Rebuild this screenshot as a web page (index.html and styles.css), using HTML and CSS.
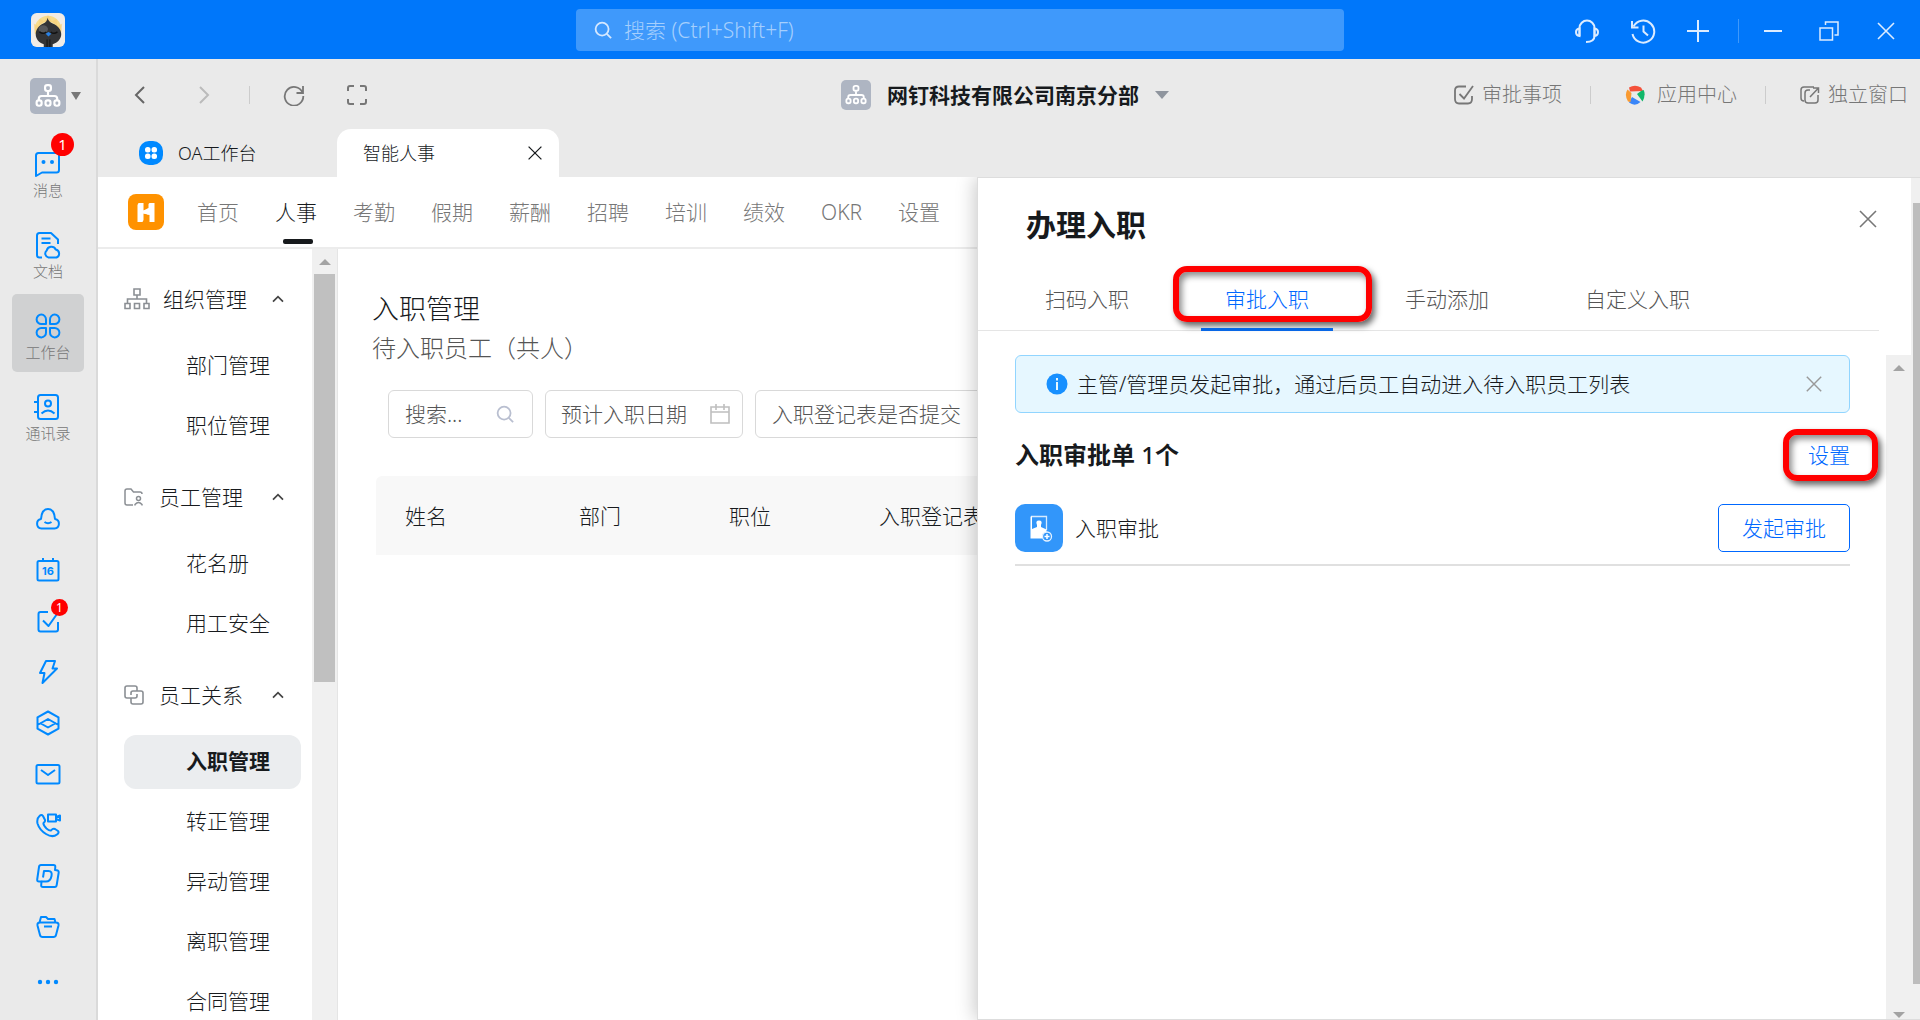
FILE: index.html
```html
<!DOCTYPE html>
<html lang="zh-CN">
<head>
<meta charset="utf-8">
<title>智能人事</title>
<link rel="stylesheet" href="styles.css">
</head>
<body>
<svg class="defs" aria-hidden="true">
  <symbol id="org" viewBox="0 0 24 24"><g fill="none" stroke="#fff" stroke-width="2"><rect x="9.300" y="2" width="5.400" height="5.400" rx="2"/><path d="M12 8v5M3.500 16v-1.500q0-2.500 2.500-2.500h12q2.500 0 2.500 2.500V16"/><rect x="1.500" y="16" width="4.600" height="5" rx="2"/><rect x="9.700" y="16" width="4.600" height="5" rx="2"/><rect x="17.900" y="16" width="4.600" height="5" rx="2"/></g></symbol>
  <symbol id="cross" viewBox="0 0 20 20"><path d="M2 2l16 16M18 2L2 18" fill="none" stroke="currentColor" stroke-width="1.600"/></symbol>
  <symbol id="lens" viewBox="0 0 20 20"><g fill="none" stroke="currentColor" stroke-width="2"><circle cx="9" cy="9" r="7.200"/><path d="M14.200 14.200l4.800 4.800"/></g></symbol>
  <symbol id="up" viewBox="0 0 12 8"><path d="M1 6.700l5-5 5 5" fill="none" stroke="currentColor" stroke-width="1.700"/></symbol>
</svg>

<header class="titlebar">
  <svg class="avatar" viewBox="0 0 36 36"><rect width="36" height="36" rx="6" fill="#f1ece6"/><circle cx="18" cy="17" r="14" fill="#f8dc8c"/><path d="M4 22L3 11l5 3 1-8 5 3 4-7 4 7 5-3 1 8 5-3-1 11" fill="#f6cf78" opacity=".6"/><circle cx="18" cy="20" r="11" fill="#fbeeb5"/><path d="M17.500 5c.8 3 2.500 5 5.500 6 5 2 9 6 9 11.500 0 5-4 9-9 10.500V36H13.500v-3c-5-1.500-8.500-5.500-8.500-10.500 0-5.500 3.500-9.500 8-11.500 3-1 4-3 4.500-6z" fill="#333436"/><ellipse cx="13" cy="17" rx="5" ry="4" fill="#56585b"/><path d="M9 20q4 3 7 0M21 20q3 3 7 0" stroke="#111" fill="none" stroke-width="1.500"/><path d="M15.500 22l3-2 3 2-3 3z" fill="#2882e8"/><path d="M17 28v8M20 28v8" stroke="#111"/></svg>
  <label class="global-search">
    <svg width="18" height="18"><use href="#lens"/></svg>
    <input type="text" placeholder="搜索 (Ctrl+Shift+F)" aria-label="搜索">
  </label>
  <div class="window-tools">
    <button aria-label="客服"><svg width="24" height="26" viewBox="1 0 24 26"><g fill="none" stroke="#dcecff" stroke-width="2"><path d="M5.500 18V10a7.500 7.500 0 0 1 15 0v8c0 4-3 6-8.500 6"/><path d="M5.500 10.500c-2.500.3-3.500 1.500-3.500 3.500s1 3.700 3.500 4zM20.500 10.500c2.500.3 3.500 1.500 3.500 3.500s-1 3.700-3.500 4z"/></g></svg></button>
    <button aria-label="历史"><svg width="26" height="26" viewBox="0 0 26 26"><g fill="none" stroke="#dcecff" stroke-width="2"><path d="M3.500 8.500A11 11 0 1 1 2.500 16"/><path d="M2 3v6.500h6.500"/><path d="M13.500 7.500v6l4.500 4"/></g></svg></button>
    <button aria-label="新建"><svg width="22" height="22" viewBox="0 0 22 22"><path d="M11 0v22M0 11h22" stroke="#dcecff" stroke-width="2"/></svg></button>
    <i class="bar-divider"></i>
    <button aria-label="最小化"><svg width="18" height="18" viewBox="0 0 18 18"><path d="M0 9h18" stroke="#dcecff" stroke-width="2"/></svg></button>
    <button aria-label="还原" class="restore"><svg width="20" height="20" viewBox="0 0 20 20"><g fill="none" stroke="#dcecff" stroke-width="1.500"><path d="M1 7h12.500v12H1z"/><path d="M6.500 4V1H19v13h-3.500"/></g></svg></button>
    <button aria-label="关闭"><svg width="20" height="20"><use href="#cross"/></svg></button>
  </div>
</header>

<div class="shell">
  <nav class="rail">
    <button class="org-switch" aria-label="切换组织"><span class="org-badge"><svg width="26" height="26"><use href="#org"/></svg></span><i class="caret"></i></button>
    <a class="rail-item" href="#"><svg width="28" height="28" viewBox="0 0 28 28"><path d="M2 26V5.500Q2 3 4.500 3h18Q25 3 25 5.500V20q0 2.500-2.500 2.500H8z" class="ln"/><circle cx="9.500" cy="12" r="2" fill="#0089ff"/><circle cx="18" cy="12" r="2" fill="#0089ff"/></svg><span>消息</span><b class="count">1</b></a>
    <a class="rail-item" href="#"><svg width="28" height="28" viewBox="0 0 28 28"><path d="M8 26.500H5.500Q3 26.500 3 24V4.500Q3 2 5.500 2H17l7 6.500V13M7.500 7.500h9M7.500 12h9" class="ln"/><path d="M14.500 26.500a4 4 0 0 1-1.800-7 4.800 4.800 0 0 1 9-1 4.200 4.200 0 0 1 .8 8z" class="ln"/></svg><span>文档</span></a>
    <a class="rail-item current" href="#"><svg width="28" height="28" viewBox="0 0 28 28"><path d="M12 12H7.500A4.700 4.700 0 1 1 12 7.500zM16 12V7.500A4.700 4.700 0 1 1 20.500 12zM12 16v4.500A4.700 4.700 0 1 1 7.500 16zM16 16h4.500a4.700 4.700 0 1 1-4.500 4.500z" class="ln"/></svg><span>工作台</span></a>
    <a class="rail-item" href="#"><svg width="28" height="28" viewBox="0 0 28 28"><rect x="4" y="2" width="20" height="24" rx="2.500" class="ln"/><path d="M0 9h4M0 19h4M7.500 20.500q6.500-6 13 0" class="ln"/><circle cx="14" cy="10.500" r="3" class="ln"/></svg><span>通讯录</span></a>
    <div class="rail-apps">
      <a href="#" aria-label="钉盘"><svg width="26" height="26" viewBox="0 0 26 26"><path d="M6.500 22.500a4.800 4.800 0 0 1-.5-9.500C6.500 6 9 3 13 3s6.500 3 7 10a4.800 4.800 0 0 1-.5 9.500zM9.500 16q3.500 2.500 7 0" class="ln"/></svg></a>
      <a href="#" aria-label="日历"><svg width="26" height="26" viewBox="0 0 26 26"><rect x="2.500" y="4" width="21" height="19.500" rx="1.500" class="ln"/><path d="M8 1v3M18 1v3" class="ln"/><text x="13" y="18" text-anchor="middle" class="cal-day">16</text></svg></a>
      <a href="#" aria-label="待办"><svg width="26" height="26" viewBox="0 0 26 26"><path d="M13 4H5.500Q3.500 4 3.500 6v15.500q0 2 2 2h15.500q2 0 2-2V14M8 12.500l5.500 5.500L22 6" class="ln"/></svg><b class="count small">1</b></a>
      <a href="#" aria-label="闪记"><svg width="26" height="26" viewBox="0 0 26 26"><path d="M11 2h9l-2.500 7.500H22L7.500 24l2-10H5z" class="ln"/></svg></a>
      <a href="#" aria-label="项目"><svg width="26" height="26" viewBox="0 0 26 26"><path d="M13 1.500l10.500 5.800v11.400L13 24.500 2.500 18.700V7.300zM2.500 15L13 9l10.500 6M5 13l8 4.500 8-4.500" class="ln"/></svg></a>
      <a href="#" aria-label="邮箱"><svg width="26" height="26" viewBox="0 0 26 26"><rect x="1.500" y="4" width="23" height="18.500" rx="1.500" class="ln"/><path d="M6 9l7 5 7-5" class="ln"/></svg></a>
      <a href="#" aria-label="电话会议"><svg width="26" height="26" viewBox="0 0 26 26"><path d="M4.500 4q2-2 3.500 0l2 4q.5 1.500-1.500 3-.5 2 3 5.500 3 2.500 4.500 2 2-2.500 4-1.500l3 2q1.500 1.500-1 3.500-4.500 3.500-11-.5-6.500-4-8.500-10.500-1-5 2-7.500z" class="ln"/><path d="M13 2.500h8v7h-8zM21 5l4-1.500v5L21 7" class="ln"/></svg></a>
      <a href="#" aria-label="文稿"><svg width="26" height="26" viewBox="0 0 26 26"><path d="M6 2h12.500q2 0 1.800 2l-.3 3q4 0 3.700 2.500l-2 12.500q-.2 2-2 2H8q-2 0-1.800-2l.3-3.500H4q-2 0-1.800-2L4 4q.3-2 2-2z" class="ln"/><path d="M8 14.500L9 8h4.500q4 0 3 5-1 5.500-5.500 5.500H6.500" class="ln"/></svg></a>
      <a href="#" aria-label="文件"><svg width="26" height="26" viewBox="0 0 26 26"><path d="M4.500 8.500L6 3h5l2 2h6.500l1 3.500M5 8.500h16q3 0 2.500 3L21 21q-.5 2-2.500 2h-11q-2 0-2.500-2L2.500 11.500q-.5-3 2.500-3zM9 12.500h8" class="ln"/></svg></a>
      <a href="#" aria-label="更多" class="more"><svg width="26" height="26" viewBox="0 0 26 26"><circle cx="5" cy="13" r="2.200" fill="#0089ff"/><circle cx="13" cy="13" r="2.200" fill="#0089ff"/><circle cx="21" cy="13" r="2.200" fill="#0089ff"/></svg></a>
    </div>
  </nav>

  <div class="workspace">
    <div class="toolbar">
      <div class="history">
        <button aria-label="后退"><svg width="20" height="20" viewBox="0 0 20 20"><path d="M14 2L6 10l8 8" fill="none" stroke="#666" stroke-width="2"/></svg></button>
        <button aria-label="前进" class="forward"><svg width="20" height="20" viewBox="0 0 20 20"><path d="M6 2l8 8-8 8" fill="none" stroke="#bbb" stroke-width="2"/></svg></button>
        <i class="divider"></i>
        <button aria-label="刷新" class="reload"><svg width="22" height="22" viewBox="0 0 22 22"><path d="M19.500 8.500A9.300 9.300 0 1 0 20.300 12M20 2v7h-6.500" fill="none" stroke="#777" stroke-width="1.800"/></svg></button>
        <button aria-label="全屏"><svg width="20" height="20" viewBox="0 0 20 20"><path d="M1 6V3q0-2 2-2h4M13 1h4q2 0 2 2v3M19 14v3q0 2-2 2h-4M7 19H3q-2 0-2-2v-3" fill="none" stroke="#777" stroke-width="2"/></svg></button>
      </div>
      <button class="company"><span class="org-badge"><svg width="22" height="22"><use href="#org"/></svg></span><strong>网钉科技有限公司南京分部</strong><i class="caret wide"></i></button>
      <div class="links">
        <a href="#"><svg width="20" height="20" viewBox="0 0 20 20"><path d="M12 1.500H5Q1 1.500 1 5.500V14q0 4.500 4 4.500h9q4 0 4-4.500v-3M5.500 9l4.500 4.500L19 1" fill="none" stroke="#777" stroke-width="1.800"/></svg>审批事项</a>
        <i class="divider"></i>
        <a href="#" class="center-link"><svg width="20" height="20" viewBox="0 0 20 20"><path d="M4 2.500Q10-1 16 2.500L18 6 5 6.500z" fill="#f4523b"/><path d="M16 6l2.700-1Q21 10 17.500 16.500L12 9z" fill="#12b76a"/><path d="M7 12l8.500 5Q10 22 4 17.500z" fill="#3a86f8"/><path d="M2.500 4.500L6.500 8l-1 9-2.500-.5Q-1 10 2.500 4.500z" fill="#f99a31"/></svg>应用中心</a>
        <i class="divider"></i>
        <a href="#"><svg width="20" height="20" viewBox="0 0 20 20"><path d="M14 2H4Q1 2 1 5v8q0 3 3 3M10 5H8Q5 5 5 8v7q0 3 3 3h7q3 0 3-3v-5M10 12l8.500-9M13 3h5.500v5" fill="none" stroke="#777" stroke-width="1.500"/></svg>独立窗口</a>
      </div>
    </div>

    <div class="tabs">
      <a class="tab" href="#"><svg width="24" height="24" viewBox="0 0 24 24"><rect width="24" height="24" rx="10" fill="#0089ff"/><g fill="#fff"><rect x="6" y="6" width="5.500" height="5.500" rx="2.500"/><rect x="12.500" y="6" width="5.500" height="5.500" rx="2.500"/><rect x="6" y="12.500" width="5.500" height="5.500" rx="2.500"/><rect x="12.500" y="12.500" width="5.500" height="5.500" rx="2.500"/></g></svg>OA工作台</a>
      <div class="tab active"><span>智能人事</span><button aria-label="关闭标签"><svg width="16" height="16"><use href="#cross"/></svg></button></div>
    </div>

    <div class="app">
      <nav class="app-nav">
        <svg class="app-logo" width="36" height="36" viewBox="0 0 36 36"><rect width="36" height="36" rx="8" fill="#ff9200"/><path d="M10.500 9h5v7.500l5-2.500V10l1-1h5v19h-5v-7l-6-1.500V26l-1 2h-5V11z" fill="#fff"/><path d="M15.500 16.500h2.500l2.500-2.500v7l-2.500-1.500h-2.500z" fill="#fff"/></svg>
        <a href="#">首页</a><a href="#" class="on">人事</a><a href="#">考勤</a><a href="#">假期</a><a href="#">薪酬</a><a href="#">招聘</a><a href="#">培训</a><a href="#">绩效</a><a href="#">OKR</a><a href="#">设置</a>
      </nav>
      <div class="app-body">
        <aside class="menu">
          <div class="menu-list">
            <section>
              <button class="group"><svg width="26" height="22" viewBox="0 0 26 22"><g fill="none" stroke="#8b8f94" stroke-width="1.600"><path d="M10 1h6v6h-6zM13 7v4M3.500 15v-4h19v4M1 15.500h5v5H1zM10.500 15.500h5v5h-5zM20 15.500h5v5h-5z"/></g></svg><span>组织管理</span><svg class="chev" width="12" height="8"><use href="#up"/></svg></button>
              <a href="#">部门管理</a><a href="#">职位管理</a>
            </section>
            <section>
              <button class="group short"><svg width="20" height="20" viewBox="0 0 20 20"><g fill="none" stroke="#8b8f94" stroke-width="1.500"><path d="M9 18H3q-2 0-2-2V4q0-2 2-2h4l2.500 3H16q2 0 2 2"/><circle cx="14.500" cy="11.500" r="2"/><path d="M11 18.500v-1q3.500-4 7 0v1"/></g></svg><span>员工管理</span><svg class="chev" width="12" height="8"><use href="#up"/></svg></button>
              <a href="#">花名册</a><a href="#">用工安全</a>
            </section>
            <section>
              <button class="group short"><svg width="20" height="20" viewBox="0 0 20 20"><g fill="none" stroke="#8b8f94" stroke-width="1.600"><path d="M13 9v2q0 2-2 2H3q-2 0-2-2V3q0-2 2-2h8q2 0 2 2v3"/><path d="M7 13v4q0 2 2 2h8q2 0 2-2V8q0-2-2-2H9Q7 6 7 8v2"/></g></svg><span>员工关系</span><svg class="chev" width="12" height="8"><use href="#up"/></svg></button>
              <a href="#" class="on">入职管理</a><a href="#">转正管理</a><a href="#">异动管理</a><a href="#">离职管理</a><a href="#">合同管理</a>
            </section>
          </div>
          <div class="scroll"><i class="arrow-up"></i><i class="thumb"></i></div>
        </aside>
        <main class="page">
          <h1>入职管理</h1>
          <p class="sub">待入职员工（共人）</p>
          <div class="filters">
            <label class="field search"><input type="text" placeholder="搜索..." aria-label="搜索员工"><svg width="18" height="18"><use href="#lens"/></svg></label>
            <label class="field date"><input type="text" placeholder="预计入职日期" aria-label="预计入职日期"><svg width="20" height="20" viewBox="0 0 20 20"><path d="M1 3h18v16H1zM1 8h18M6 0v6M14 0v6" fill="none" stroke="#bfbfbf" stroke-width="1.600"/></svg></label>
            <label class="field form"><select aria-label="入职登记表是否提交"><option>入职登记表是否提交</option></select></label>
          </div>
          <table>
            <thead><tr><th class="c-name">姓名</th><th class="c-mid">部门</th><th class="c-mid">职位</th><th>入职登记表</th></tr></thead>
          </table>
        </main>
      </div>

      <aside class="drawer">
        <div class="drawer-main">
          <div class="drawer-head"><h2>办理入职</h2><button aria-label="关闭"><svg width="20" height="20"><use href="#cross"/></svg></button></div>
          <div class="drawer-tabs">
            <button>扫码入职</button><button class="on marked">审批入职</button><button>手动添加</button><button>自定义入职</button>
          </div>
          <div class="drawer-scroll">
            <div class="drawer-body">
              <div class="notice"><svg width="22" height="22" viewBox="0 0 22 22"><circle cx="11" cy="11" r="10.500" fill="#1890ff"/><path d="M11 9v8M11 5v2.500" stroke="#e6f7ff" stroke-width="2"/></svg><span>主管/管理员发起审批，通过后员工自动进入待入职员工列表</span><button aria-label="关闭提示"><svg width="18" height="18"><use href="#cross"/></svg></button></div>
              <div class="list-head"><h3>入职审批单 <span>1</span>个</h3><a href="#" class="marked">设置</a></div>
              <div class="flow">
                <svg width="48" height="48" viewBox="0 0 48 48"><rect width="48" height="48" rx="10" fill="#3296fa"/><path d="M16 12.500h15.500V26" fill="none" stroke="#fff" stroke-opacity=".8" stroke-width="1.300"/><path d="M15.500 12.500H17V25l5-2v-2q-2-4.500 2-4.500t2 4.500v2l5.500 2.500v2.500l-4 2.500v4H15.500z" fill="#fff"/><circle cx="32" cy="32.500" r="4.500" fill="#3296fa" stroke="#e5f2ff" stroke-width="1.300"/><path d="M32 30v5M29.500 32.500h5" stroke="#fff" stroke-width="1.500"/></svg>
                <span>入职审批</span><button>发起审批</button>
              </div>
            </div>
            <div class="scroll"><i class="arrow-up"></i><i class="arrow-down"></i></div>
          </div>
        </div>
        <div class="page-scroll"><i></i></div>
      </aside>
    </div>
  </div>
</div>
</body>
</html>
```
FILE: styles.css
```css
* { box-sizing: border-box; }
body {
  margin: 0;
  height: 100vh;
  display: flex;
  flex-direction: column;
  overflow: hidden;
  background: #fff;
  color: #171a1d;
  font: 21px/30px "Noto Sans", "Noto Sans CJK SC", sans-serif;
  font-weight: 300;
}
button, input, select { font: inherit; color: inherit; border: 0; background: none; padding: 0; margin: 0; }
input { min-width: 0; outline: 0; }
a { color: inherit; text-decoration: none; }
h1, h2, h3, p { margin: 0; }
svg { display: block; flex: none; }
.defs { position: absolute; width: 0; height: 0; }
.ln { fill: none; stroke: #0089ff; stroke-width: 2; stroke-linejoin: round; }

/* window title bar */
.titlebar {
  flex: none;
  height: 59px;
  display: grid;
  grid-template-columns: 1fr 768px 1fr;
  align-items: center;
  background: #0077fa;
}
.avatar { width: 34px; height: 36px; margin-left: 31px; }
.global-search {
  height: 42px;
  display: flex;
  align-items: center;
  gap: 12px;
  padding: 0 18px;
  border-radius: 4px;
  background: #3f99fb;
  color: #d5e8ff;
}
.global-search input { flex: 1; font-size: 21px; }
.global-search input::placeholder { color: #a5cffd; opacity: 1; }
.window-tools { display: flex; justify-content: flex-end; align-items: center; gap: 31px; padding: 3px 24px 0 0; }
.window-tools button { color: #dcecff; }
.bar-divider { width: 1px; height: 24px; background: #3f99fb; margin-left: -2px; margin-right: -6px; }
.window-tools .restore { margin: 0 6px; }

.shell { flex: 1; min-height: 0; display: flex; }

/* left rail */
.rail {
  flex: none;
  width: 98px;
  display: flex;
  flex-direction: column;
  gap: 3px;
  padding: 19px 12px 0;
  background: #eaeaea;
  border-right: 2px solid #dadada;
}
.org-switch { display: flex; align-items: center; gap: 5px; margin: 0 0 15px 18px; }
.org-badge { width: 36px; height: 36px; display: grid; place-items: center; border-radius: 5px; background: #aeb5c2; }
.caret { border: 5px solid transparent; border-top: 8px solid #777; border-bottom: 0; }
.caret.wide { border-width: 8px 7px 0; border-top-color: #8f959e; }
.rail-item {
  position: relative;
  height: 78px;
  display: flex;
  flex-direction: column;
  align-items: center;
  padding-top: 18px;
  border-radius: 5px;
  color: #777;
  font-size: 15px;
  line-height: 24px;
}
.rail-item.current { background: #d0d1d2; }
.count {
  position: absolute;
  top: 1px;
  right: 10px;
  width: 23px;
  height: 23px;
  border-radius: 50%;
  background: #f00;
  color: #fff;
  font-size: 15px;
  font-weight: 400;
  line-height: 23px;
  text-align: center;
}
.rail-apps { display: flex; flex-direction: column; padding-top: 37px; }
.rail-apps a { position: relative; height: 51px; display: grid; place-items: center; }
.rail-apps .more { margin-top: 4px; }
.count.small { top: 4px; right: 16px; width: 17px; height: 17px; font-size: 12px; line-height: 17px; }
.cal-day { fill: #0089ff; font: 700 11px "Inter", sans-serif; }

/* toolbar */
.workspace { flex: 1; min-width: 0; display: flex; flex-direction: column; }
.toolbar {
  flex: none;
  height: 70px;
  display: grid;
  grid-template-columns: 1fr auto 1fr;
  align-items: center;
  padding-top: 2px;
  background: #eaeaea;
}
.history { display: flex; align-items: center; padding-left: 32px; }
.history .forward { margin: 0 35px 0 44px; }
.history .reload { margin: 0 42px 0 33px; }
.divider { width: 1px; height: 18px; background: #ccc; }
.company { display: flex; align-items: center; gap: 16px; margin-right: 8px; }
.company .org-badge { width: 30px; height: 30px; }
.company strong { font-weight: 700; }
.links { display: flex; justify-content: flex-end; align-items: center; padding-right: 12px; color: #777; font-size: 20px; }
.links a { display: flex; align-items: center; gap: 8px; }
.links .divider { margin: 0 34px 0 28px; }
.links .center-link { gap: 12px; }

.tabs { flex: none; height: 48px; display: flex; background: #eaeaea; font-size: 18px; }
.tab { width: 239px; display: flex; align-items: center; gap: 15px; padding-left: 41px; }
.tab.active { width: 222px; justify-content: space-between; padding: 0 16px 0 26px; background: #fff; border-radius: 14px 14px 0 0; }

/* application */
.app { position: relative; flex: 1; min-height: 0; display: flex; flex-direction: column; }
.app-nav { flex: none; height: 72px; display: flex; align-items: center; gap: 36px; padding-left: 30px; border-bottom: 2px solid #ececec; color: #777; }
.app-logo { margin-right: -3px; }
.app-nav a { height: 70px; line-height: 70px; position: relative; }
.app-nav .on { color: #171a1d; }
.app-nav .on::after { content: ""; position: absolute; left: 8px; bottom: 3px; width: 30px; height: 5px; border-radius: 2px; background: #171a1d; }
.app-body { flex: 1; min-height: 0; display: flex; }

.menu { flex: none; width: 240px; display: flex; border-right: 1px solid #e5e5e5; overflow: hidden; }
.menu-list { flex: 1; padding: 12px 11px 0 26px; }
.menu section { padding-top: 3px; }
.group { width: 100%; height: 75px; display: flex; align-items: center; gap: 13px; padding-bottom: 5px; }
.group.short { gap: 15px; }
.chev { margin-left: auto; margin-right: 17px; color: #444; }
.menu-list a { display: block; height: 54px; margin-bottom: 6px; padding-left: 62px; line-height: 52px; border-radius: 12px; }
.menu-list .on { background: #ebedef; font-weight: 700; }
.scroll { flex: none; width: 25px; display: flex; flex-direction: column; align-items: center; padding: 10px 2px 1px 2px; background: #f0f0f0; }
.arrow-up { border: 6px solid transparent; border-bottom: 6px solid #a3a3a3; border-top: 0; }
.arrow-down { margin-top: auto; border: 6px solid transparent; border-top: 6px solid #a3a3a3; border-bottom: 0; }
.thumb { width: 21px; height: 408px; margin-top: 9px; background: #c0c0c0; }

.page { flex: 1; min-width: 0; padding: 40px 0 0 34px; }
h1 { font-size: 27px; font-weight: 300; line-height: 40px; }
.sub { font-size: 24px; line-height: 38px; color: #555; }
.filters { display: flex; gap: 12px; margin: 23px 16px 38px; }
.field { height: 48px; display: flex; align-items: center; padding: 0 18px 0 16px; border: 1px solid #d9d9d9; border-radius: 6px; color: #555; }
.field input { flex: 1; width: 0; }
.field input::placeholder { color: #555; opacity: 1; }
.field.search { width: 145px; color: #b9bfd0; }
.field.date { width: 198px; padding: 0 12px 0 15px; }
.field.form { width: 260px; }
.field select { flex: 1; appearance: none; }
table { width: calc(100% - 18px); margin-left: 4px; border-collapse: collapse; table-layout: fixed; }
th { height: 79px; padding: 0; text-align: left; font-weight: 300; background: #f8f8f8; }
th:first-child { padding-left: 29px; border-top-left-radius: 6px; }
.c-name { width: 203px; }
.c-mid { width: 150px; }

/* onboarding drawer over the page */
.drawer {
  position: absolute;
  inset: 0 0 0 auto;
  width: 943px;
  display: flex;
  background: #fff;
  border: 1px solid #ddd;
  border-right: 0;
  box-shadow: -2px 0 18px rgba(0, 0, 0, .22);
  clip-path: inset(0 0 0 -30px);
}
.drawer-main { flex: 1; min-width: 0; display: flex; flex-direction: column; }
.drawer-head { flex: none; display: flex; align-items: flex-start; justify-content: space-between; padding: 26px 33px 0 48px; height: 92px; }
h2 { font-size: 30px; line-height: 42px; font-weight: 700; }
.drawer-head button { padding-top: 5px; color: #777; }
.drawer-tabs { flex: none; display: flex; gap: 48px; height: 61px; margin-right: 32px; padding-left: 43px; border-bottom: 1px solid #e5e5e5; color: #555; }
.drawer-tabs button { position: relative; padding: 0 24px 2px; }
.drawer-tabs .on { color: #0068ff; }
.drawer-tabs .on::after { content: ""; position: absolute; left: 0; right: 0; bottom: -1px; height: 3px; background: #0766e6; }
.marked { position: relative; }
.marked::before {
  content: "";
  position: absolute;
  inset: -4px -39px 8px -28px;
  border: 6px solid #f00;
  border-radius: 14px;
  box-shadow: 3px 4px 6px rgba(0, 0, 0, .6), inset 3px 4px 6px rgba(0, 0, 0, .45);
}
.drawer-scroll { flex: 1; min-height: 0; display: flex; margin-top: 24px; }
.drawer-body { flex: 1; min-width: 0; padding: 0 36px 0 37px; }
.notice { display: flex; align-items: center; gap: 9px; height: 58px; padding: 0 26px 0 30px; border: 1px solid #91d5ff; border-radius: 6px; background: #e6f7ff; }
.notice button { margin-left: auto; color: #999; }
.list-head { display: flex; align-items: center; justify-content: space-between; height: 84px; }
h3 { font-size: 24px; font-weight: 700; }
h3 span { font-weight: 500; }
.list-head a { color: #0068ff; }
.list-head .marked::before { inset: -11px -28px -11px -25px; }
.flow { display: flex; align-items: center; gap: 12px; height: 69px; padding: 7px 0 12px; border-bottom: 2px solid #e0e0e0; }
.flow button { width: 132px; height: 48px; margin-left: auto; border: 1px solid #0068ff; border-radius: 5px; color: #0068ff; }
.page-scroll { flex: none; width: 9px; padding: 25px 0 35px 2px; background: #f0f0f0; }
.page-scroll i { display: block; height: 100%; background: #bdbdbd; }
```
